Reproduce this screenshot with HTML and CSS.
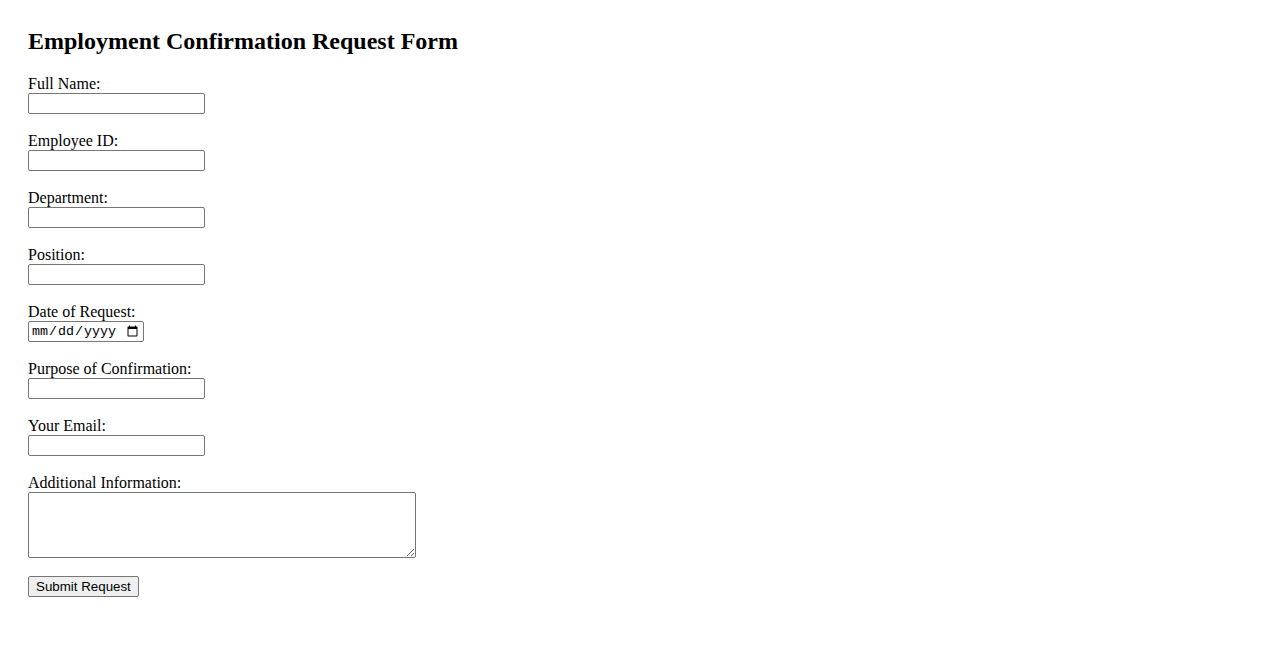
FILE: index.html
```html
<!DOCTYPE html>
<html lang="en">
<head>
<meta charset="utf-8">
<title>Employment Confirmation Request Form</title>
<link rel="stylesheet" href="styles.css">
</head>
<body>
<h2 class="title">Employment Confirmation Request Form</h2>
<form class="form">
  <div class="field"><label class="label" for="name">Full Name:</label><input class="input" type="text" id="name"></div>
  <div class="field"><label class="label" for="eid">Employee ID:</label><input class="input" type="text" id="eid"></div>
  <div class="field"><label class="label" for="dept">Department:</label><input class="input" type="text" id="dept"></div>
  <div class="field"><label class="label" for="pos">Position:</label><input class="input" type="text" id="pos"></div>
  <div class="field"><label class="label" for="date">Date of Request:</label><input class="input date" type="date" id="date"></div>
  <div class="field"><label class="label" for="purpose">Purpose of Confirmation:</label><input class="input" type="text" id="purpose"></div>
  <div class="field"><label class="label" for="email">Your Email:</label><input class="input" type="email" id="email"></div>
  <div class="field"><label class="label" for="info">Additional Information:</label><textarea class="textarea" id="info" rows="4"></textarea></div>
  <div class="actions"><button class="button" type="submit">Submit Request</button></div>
</form>
</body>
</html>
```
FILE: styles.css
```css
html, body {
  background: #ffffff;
}
body {
  margin: 0;
  padding: 27px 28px 28px 28px;
  font-family: "Liberation Serif", "Times New Roman", serif;
  font-size: 16px;
  color: #000;
}
.title {
  margin: 0 0 20px 0;
  font-size: 24px;
  font-weight: bold;
  line-height: 28px;
}
.form {
  display: flex;
  flex-direction: column;
  align-items: flex-start;
  gap: 18px;
}
.field {
  display: flex;
  flex-direction: column;
  align-items: flex-start;
}
.label {
  display: block;
  line-height: 18px;
}
.input {
  box-sizing: border-box;
  width: 177px;
  height: 21px;
  margin: 0;
  padding: 1px 2px;
  border: 1px solid #767676;
  border-radius: 2px;
  font-family: "Liberation Sans", Arial, sans-serif;
  font-size: 13.33px;
  background: #fff;
}
.date {
  width: 116px;
  font-family: "Liberation Mono", monospace;
}
.textarea {
  box-sizing: border-box;
  width: 388px;
  height: 66px;
  margin: 0;
  padding: 2px;
  border: 1px solid #767676;
  border-radius: 2px;
  font-family: "Liberation Mono", monospace;
  font-size: 13.33px;
  resize: both;
}
.actions {
  padding-top: 0;
}
.button {
  box-sizing: border-box;
  height: 21px;
  margin: 0;
  padding: 1px 7px;
  border: 1px solid #767676;
  border-radius: 2px;
  background: #efefef;
  font-family: "Liberation Sans", Arial, sans-serif;
  font-size: 13.33px;
  color: #000;
}
```
